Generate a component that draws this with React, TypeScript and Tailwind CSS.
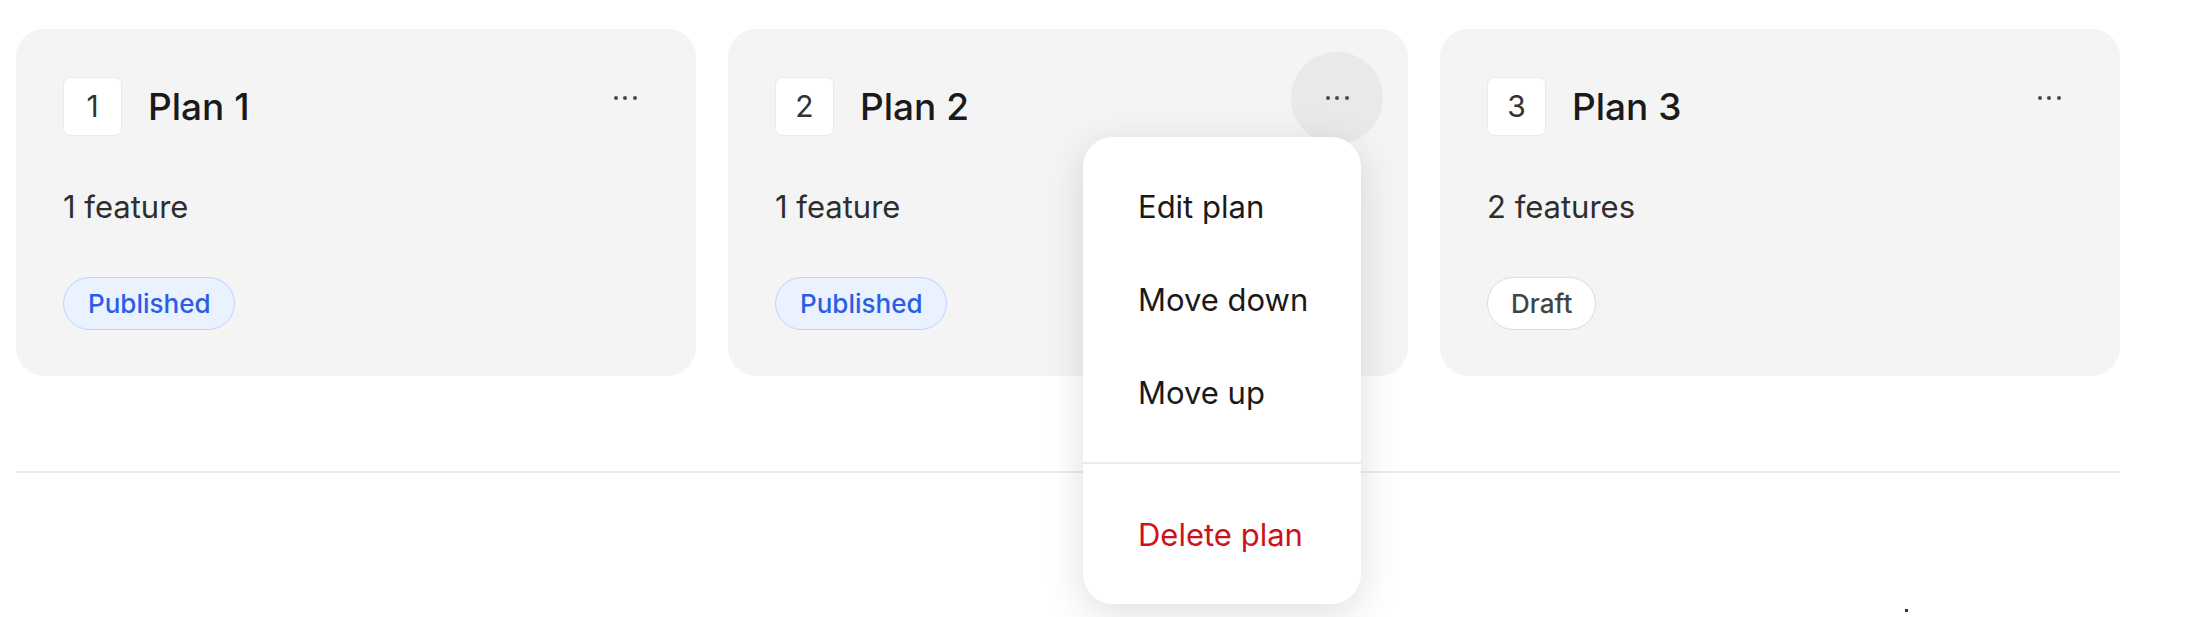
import { useState } from "react";

interface Plan {
    id: number;
    name: string;
    features: number;
    status: "Published" | "Draft";
}

const plans: Plan[] = [
    { id: 1, name: "Plan 1", features: 1, status: "Published" },
    { id: 2, name: "Plan 2", features: 1, status: "Published" },
    { id: 3, name: "Plan 3", features: 2, status: "Draft" },
];

function Dots() {
    return (
        <span className="flex items-center gap-[5.5px]">
            <span className="block w-[4px] h-[4px] rounded-full bg-[#4a4a4a]"></span>
            <span className="block w-[4px] h-[4px] rounded-full bg-[#4a4a4a]"></span>
            <span className="block w-[4px] h-[4px] rounded-full bg-[#4a4a4a]"></span>
        </span>
    );
}

function StatusBadge({ status }: { status: Plan["status"] }) {
    if (status === "Published") {
        return (
            <span className="inline-flex items-center h-[53px] px-[24px] rounded-full border border-[#bfd3fc] bg-[#eaf1ff] text-[26px] font-medium text-[#2a5fe4]">
                Published
            </span>
        );
    }
    return (
        <span className="inline-flex items-center h-[53px] px-[23px] rounded-full border border-[#dcdcdc] bg-white text-[26px] font-medium text-[#444444]">
            Draft
        </span>
    );
}

function PlanMenu() {
    return (
        <div className="absolute top-[108px] right-[47px] z-10 w-[278px] pt-[24px] pb-[22px] rounded-[30px] bg-white shadow-[0_10px_40px_rgba(0,0,0,0.13)]">
            <button type="button" className="flex items-center w-full h-[93px] pl-[55px] text-left text-[31px] text-[#1a1a1a]">
                Edit plan
            </button>
            <button type="button" className="flex items-center w-full h-[93px] pl-[55px] text-left text-[31px] text-[#1a1a1a]">
                Move down
            </button>
            <button type="button" className="flex items-center w-full h-[93px] pl-[55px] text-left text-[31px] text-[#1a1a1a]">
                Move up
            </button>
            <div className="h-[2px] mt-[22px] mb-[25px] bg-[#ececec]"></div>
            <button type="button" className="flex items-center w-full h-[93px] pl-[55px] text-left text-[31px] text-[#cf111b]">
                Delete plan
            </button>
        </div>
    );
}

function PlanCard({ plan, open }: { plan: Plan; open: boolean }) {
    return (
        <div className="relative h-[347px] rounded-[28px] bg-[#f4f4f4] px-[47px] pt-[48px]">
            <div className="flex items-center h-[59px]">
                <div className="flex items-center justify-center w-[59px] h-[59px] rounded-[7px] border border-[#ebebeb] bg-white text-[30px] text-[#333333]">
                    {plan.id}
                </div>
                <h3 className="ml-[26px] text-[37px] font-medium text-[#1a1a1a]">{plan.name}</h3>
                <button
                    type="button"
                    className={
                        open
                            ? "ml-auto -mr-[22px] -mt-[17px] flex items-center justify-center w-[92px] h-[92px] shrink-0 rounded-full bg-[#e9e9e9]"
                            : "ml-auto -mr-[22px] -mt-[17px] flex items-center justify-center w-[92px] h-[92px] shrink-0 rounded-full"
                    }
                >
                    <Dots />
                </button>
            </div>
            <p className="mt-[52px] text-[31px] leading-[38px] text-[#2e2e2e]">
                {plan.features} {plan.features === 1 ? "feature" : "features"}
            </p>
            <div className="mt-[51px]">
                <StatusBadge status={plan.status} />
            </div>
            {open && <PlanMenu />}
        </div>
    );
}

export default function App() {
    const [openId] = useState(2);

    return (
        <div className="relative min-h-[617px] bg-white pt-[29px] pl-[16px]" style={{ fontFamily: "Inter, 'Noto Sans', sans-serif" }}>
            <div className="w-[2104px]">
                <div className="grid grid-cols-3 gap-[32px]">
                    {plans.map((plan) => (
                        <PlanCard key={plan.id} plan={plan} open={plan.id === openId} />
                    ))}
                </div>
                <div className="mt-[95px] h-[2px] bg-[#ececec]"></div>
            </div>
            <span className="absolute left-[1905px] top-[609px] block w-[3px] h-[3px] bg-[#333333]"></span>
        </div>
    );
}
